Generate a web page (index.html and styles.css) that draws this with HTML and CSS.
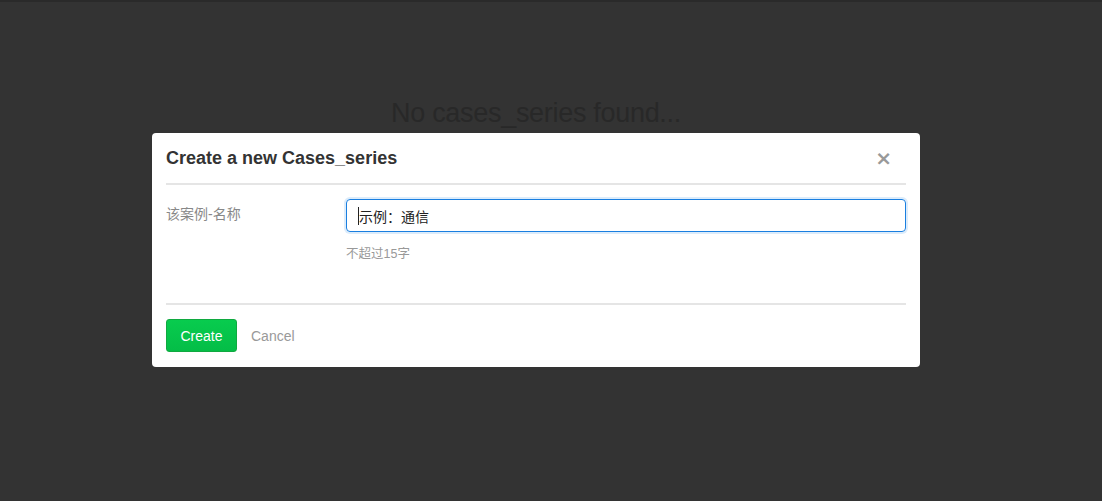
FILE: index.html
```html
<!DOCTYPE html>
<html lang="zh">
<head>
<meta charset="utf-8">
<title>Cases_series</title>
<link rel="stylesheet" href="styles.css">
</head>
<body>
<div class="page">
  <div class="empty">No cases_series found...</div>
</div>
<div class="modal">
  <div class="modal-header">
    <h3 class="modal-title">Create a new Cases_series</h3>
    <span class="close">&times;</span>
  </div>
  <div class="modal-body">
    <div class="field">
      <label class="label">该案例-名称</label>
      <div class="control">
        <div class="input"><span class="caret"></span>示例：通信</div>
        <div class="help">不超过15字</div>
      </div>
    </div>
  </div>
  <div class="modal-footer">
    <button class="btn-create">Create</button>
    <span class="cancel">Cancel</span>
  </div>
</div>
</body>
</html>
```
FILE: styles.css
```css
html, body {
  margin: 0;
  padding: 0;
  background: #333333;
  height: 100%;
}
body {
  font-family: "Liberation Sans", "Noto Sans CJK SC", sans-serif;
  border-top: 2px solid #2a2a2a;
  box-sizing: border-box;
  position: relative;
  overflow: hidden;
}
.page {
  width: 1072px;
  padding-top: 94px;
  text-align: center;
}
.empty {
  font-size: 27px;
  color: #282828;
  line-height: 34px;
  letter-spacing: -0.3px;
}
.modal {
  position: absolute;
  left: 152px;
  top: 131px;
  width: 768px;
  background: #fff;
  border-radius: 4px;
  box-sizing: border-box;
  padding: 0 14px;
}
.modal-header {
  display: flex;
  align-items: center;
  justify-content: space-between;
  height: 50px;
  border-bottom: 2px solid #e5e5e5;
}
.modal-title {
  margin: 0;
  font-size: 18px;
  font-weight: bold;
  color: #333;
}
.close {
  font-size: 20px;
  color: #999;
  margin-right: 14px;
  line-height: 20px;
  font-family: "DejaVu Sans", sans-serif;
  font-weight: bold;
}
.modal-body {
  padding: 14px 0 41px;
  border-bottom: 2px solid #e5e5e5;
}
.field {
  display: flex;
}
.label {
  width: 180px;
  flex: none;
  font-size: 14px;
  color: #888;
  line-height: 18px;
  padding-top: 6px;
}
.control {
  flex: 1;
}
.input {
  height: 33px;
  box-sizing: border-box;
  border: 1px solid #1a7fe0;
  border-radius: 4px;
  box-shadow: 0 0 0 2px #dcecfb;
  padding: 0 11px;
  font-size: 14px;
  color: #222;
  display: flex;
  align-items: center;
}
.caret {
  width: 1px;
  height: 18px;
  background: #222;
}
.help {
  margin-top: 14px;
  font-size: 12.5px;
  color: #999;
  line-height: 16px;
}
.modal-footer {
  display: flex;
  align-items: center;
  padding: 14px 0 15px;
  gap: 14px;
}
.btn-create {
  width: 71px;
  height: 33px;
  border: 1px solid #10a940;
  border-radius: 3px;
  background: linear-gradient(#08cc4e, #04bd47);
  color: #fff;
  font-size: 14px;
  font-family: "Liberation Sans", sans-serif;
  padding: 0;
}
.cancel {
  font-size: 14px;
  color: #999;
}
```
